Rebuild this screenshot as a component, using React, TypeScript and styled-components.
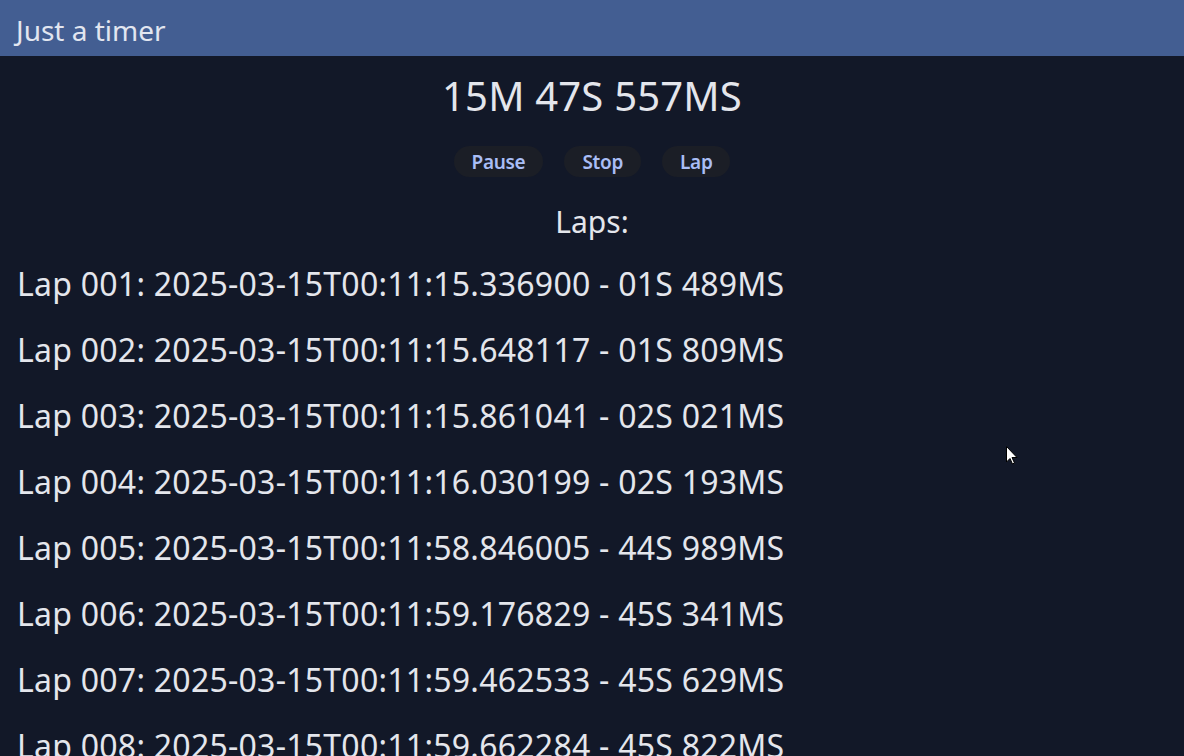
import React from "react";
import styled, { createGlobalStyle } from "styled-components";

const Global = createGlobalStyle`
  html, body { margin: 0; padding: 0; background: #121828; height: 100%; overflow: hidden; }
  body { font-family: "Noto Sans", "Open Sans", sans-serif; color: #e4e6ec; }
`;

const Page = styled.div`
  position: relative;
  display: flex;
  flex-direction: column;
  width: 1184px;
  height: 756px;
  overflow: hidden;
  background: #121828;
`;

const Header = styled.header`
  height: 56px;
  background: #435e92;
  display: flex;
  align-items: center;
  padding: 3px 16px 0;
  box-sizing: border-box;
  flex-shrink: 0;
`;

const Title = styled.h1`
  margin: 0;
  font-size: 28px;
  font-weight: 400;
  color: #e2e6f0;
`;

const Main = styled.main`
  display: flex;
  flex-direction: column;
  align-items: center;
  padding-top: 15px;
`;

const Time = styled.div`
  font-size: 40px;
  line-height: 50px;
  color: #e4e6ec;
  letter-spacing: 0.2px;
`;

const Controls = styled.div`
  display: flex;
  gap: 21px;
  margin-top: 25px;
`;

const Pill = styled.button`
  height: 31px;
  padding: 0 18px;
  border: none;
  border-radius: 16px;
  background: #1b1e26;
  color: #a9bdf5;
  font-family: "Noto Sans", sans-serif;
  font-weight: 600;
  font-size: 19px;
  letter-spacing: -0.3px;
`;

const LapsTitle = styled.div`
  font-size: 30px;
  line-height: 40px;
  margin-top: 25px;
  color: #e4e6ec;
`;

const LapList = styled.div`
  align-self: stretch;
  display: flex;
  flex-direction: column;
  gap: 26px;
  padding: 22px 17px 0;
`;

const LapRow = styled.div`
  font-size: 32px;
  line-height: 40px;
  color: #e4e6ec;
  white-space: nowrap;
  letter-spacing: 0.25px;
`;

const Cursor = styled.svg`
  position: absolute;
  left: 1006px;
  top: 446px;
  width: 12px;
  height: 19px;
`;

const laps = [
  "Lap 001: 2025-03-15T00:11:15.336900 - 01S 489MS",
  "Lap 002: 2025-03-15T00:11:15.648117 - 01S 809MS",
  "Lap 003: 2025-03-15T00:11:15.861041 - 02S 021MS",
  "Lap 004: 2025-03-15T00:11:16.030199 - 02S 193MS",
  "Lap 005: 2025-03-15T00:11:58.846005 - 44S 989MS",
  "Lap 006: 2025-03-15T00:11:59.176829 - 45S 341MS",
  "Lap 007: 2025-03-15T00:11:59.462533 - 45S 629MS",
  "Lap 008: 2025-03-15T00:11:59.662284 - 45S 822MS",
];

export default function App() {
  return (
    <>
      <Global />
      <Page>
        <Header>
          <Title>Just a timer</Title>
        </Header>
        <Main>
          <Time>15M 47S 557MS</Time>
          <Controls>
            <Pill>Pause</Pill>
            <Pill>Stop</Pill>
            <Pill>Lap</Pill>
          </Controls>
          <LapsTitle>Laps:</LapsTitle>
          <LapList>
            {laps.map((l) => (
              <LapRow key={l}>{l}</LapRow>
            ))}
          </LapList>
        </Main>
        <Cursor viewBox="0 0 12 19">
          <path d="M0.5 0.5 L0.5 16 L4 12.5 L6.5 18 L8.5 17 L6 11.5 L11 11.5 Z" fill="#fff" stroke="#000" strokeWidth="1" />
        </Cursor>
      </Page>
    </>
  );
}
